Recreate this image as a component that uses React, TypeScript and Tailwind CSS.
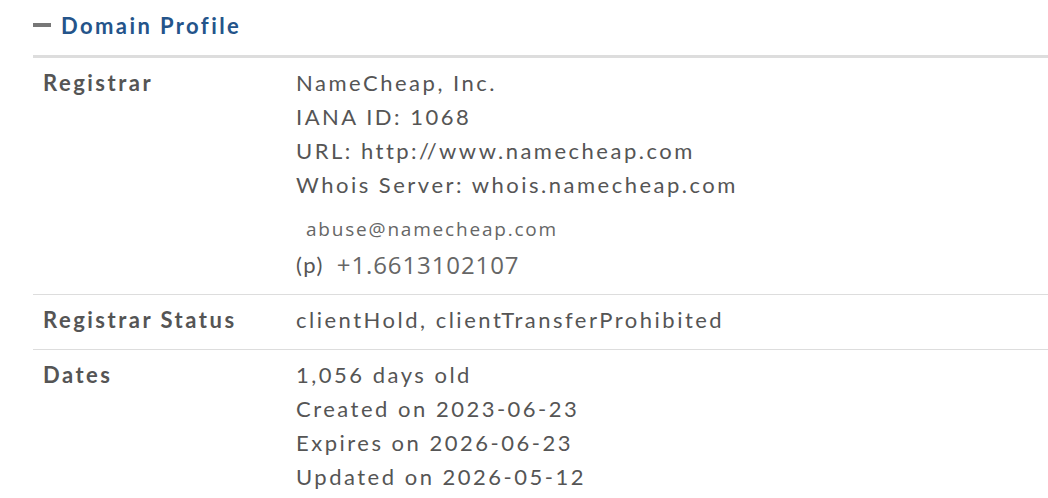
import React from "react";

const Row = ({ label, children, pad, last }: { label: string; children: React.ReactNode; pad: string; last?: boolean }) => (
  <div className={`flex ${pad} ${last ? "" : "border-b border-[#dddddd]"}`}>
    <div className="w-[253px] shrink-0 px-[10px] font-bold text-[#555555]">{label}</div>
    <div className="px-[10px] text-[#555555]">{children}</div>
  </div>
);

export default function App() {
  return (
    <div className="w-[1048px] h-[498px] overflow-hidden bg-white pl-[33px] pt-[9px]" style={{ fontFamily: "Lato, 'Noto Sans', sans-serif" }}>
      <div className="flex items-center h-[32px]">
        <div className="w-[18px] h-[4px] bg-[#777777] mr-[10px]" />
        <span className="text-[22px] font-bold text-[#24548a] tracking-[2.4px]">Domain Profile</span>
      </div>
      <div className="mt-[14px] border-t-[3px] border-[#dddddd] text-[22px] leading-[34px] tracking-[2.5px]">
        <Row label="Registrar" pad="pt-[8px] pb-[11px]">
          <div>NameCheap, Inc.</div>
          <div>IANA ID: 1068</div>
          <div>URL: http://www.namecheap.com</div>
          <div>Whois Server: whois.namecheap.com</div>
          <div className="pl-[10px] pt-[9px] leading-[36px] text-[19px] tracking-[1.8px] text-[#666666]" style={{ fontFamily: "'Open Sans', sans-serif" }}>abuse@namecheap.com</div>
          <div className="flex items-center h-[36px]">
            <span className="tracking-[1.5px]">(p)</span>
            <span className="ml-[13px] text-[24px] tracking-[0.9px] text-[#666666]" style={{ fontFamily: "'Open Sans', sans-serif" }}>+1.6613102107</span>
          </div>
        </Row>
        <Row label="Registrar Status" pad="pt-[8px] pb-[12px]">
          <div>clientHold, clientTransferProhibited</div>
        </Row>
        <Row label="Dates" pad="pt-[8px] pb-[12px]" last>
          <div>1,056 days old</div>
          <div>Created on 2023-06-23</div>
          <div>Expires on 2026-06-23</div>
          <div>Updated on 2026-05-12</div>
        </Row>
      </div>
    </div>
  );
}
